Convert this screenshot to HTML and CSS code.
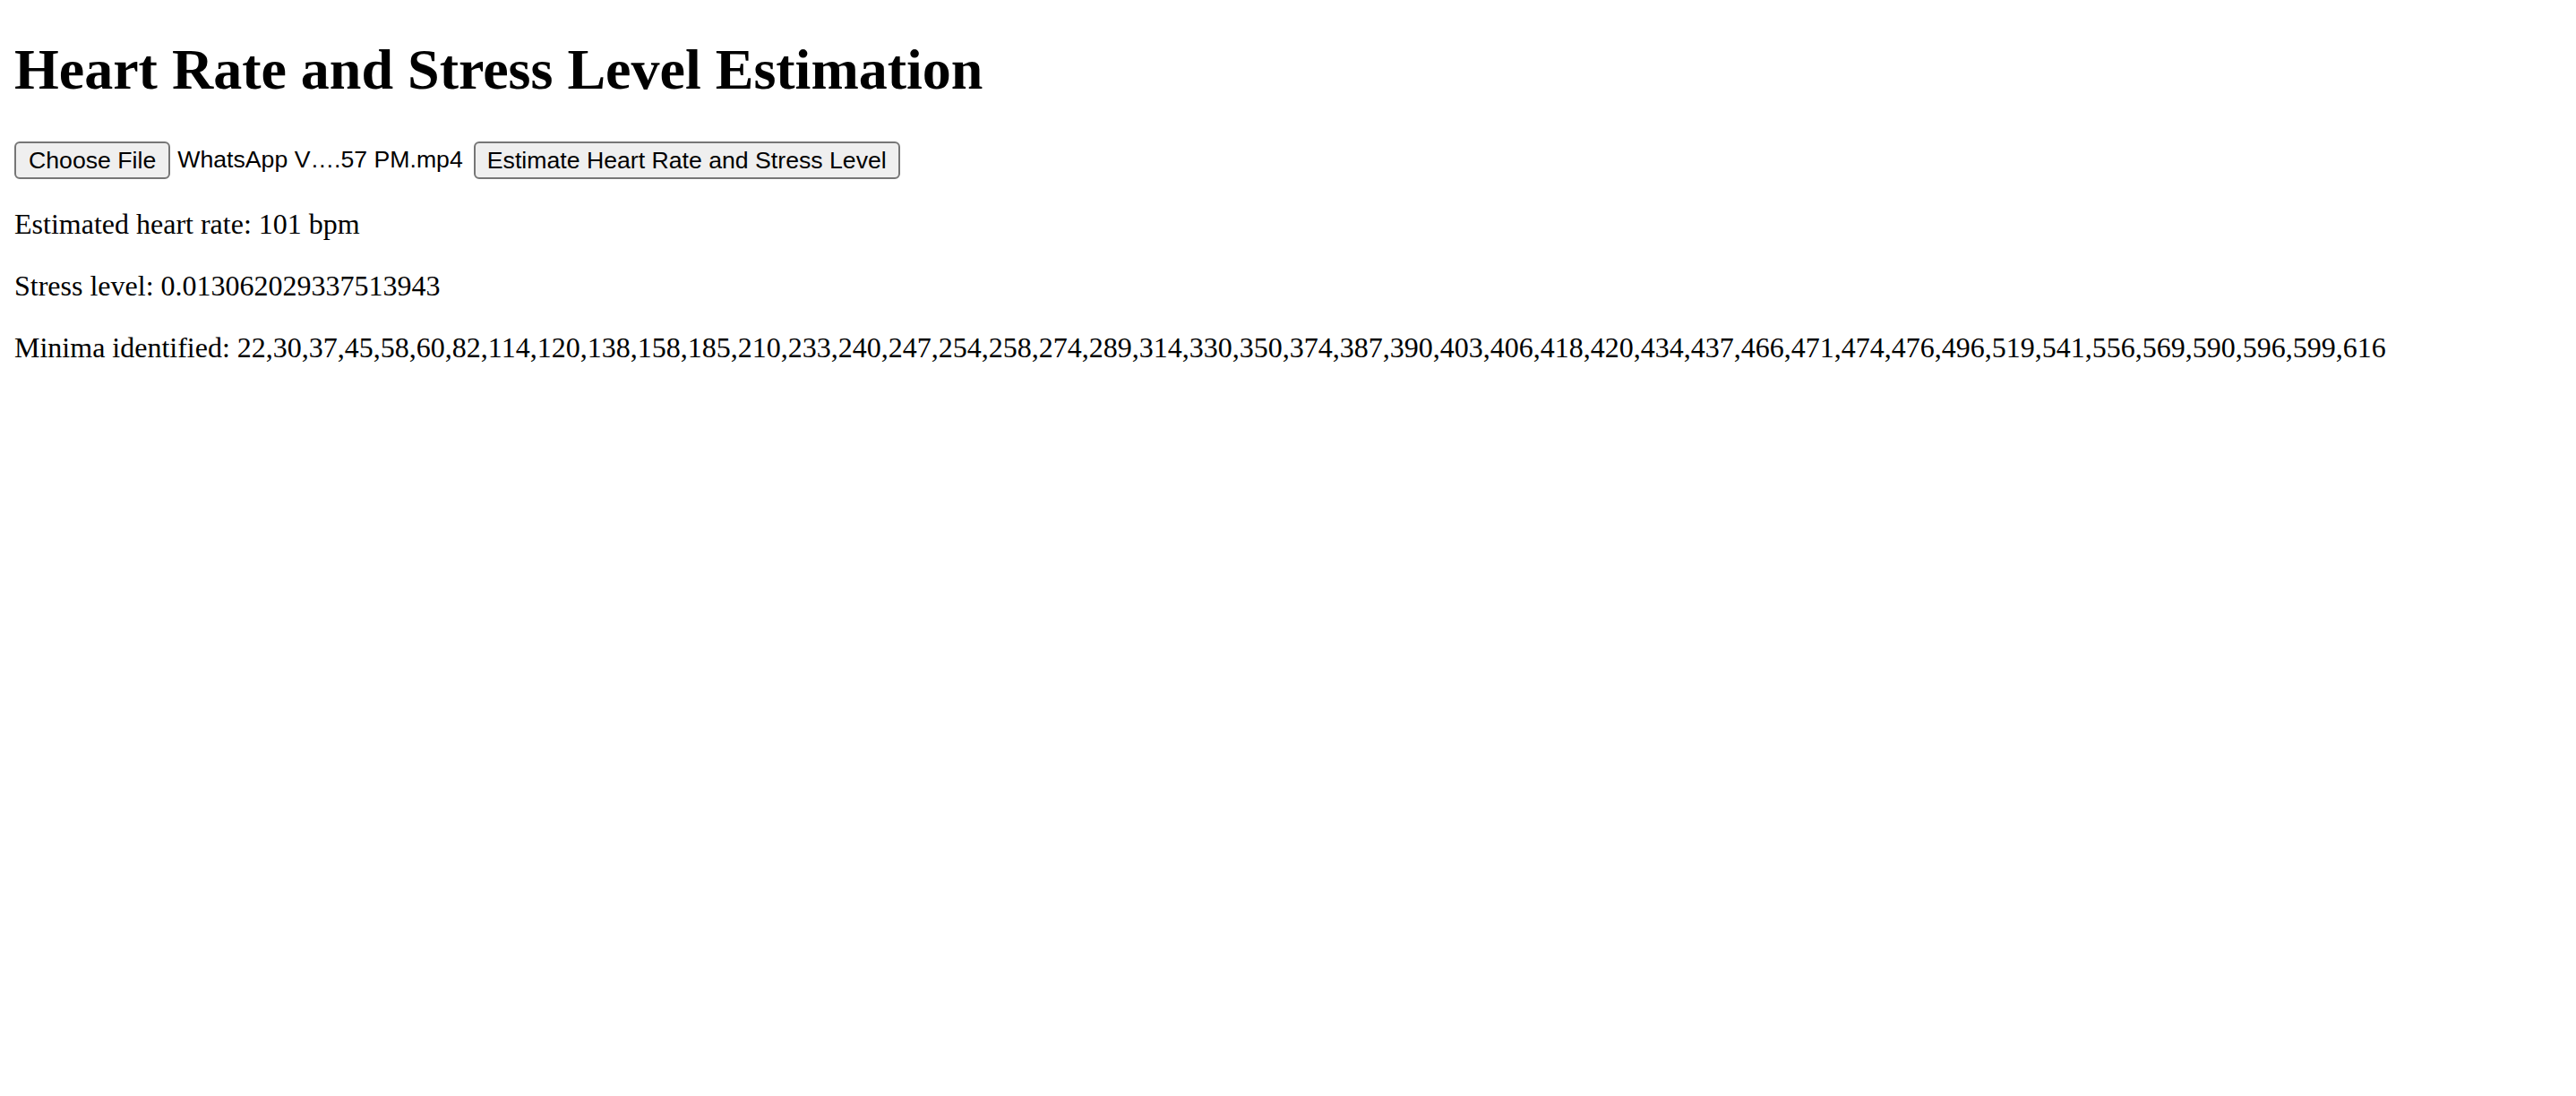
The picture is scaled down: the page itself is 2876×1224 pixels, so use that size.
FILE: index.html
```html
<!DOCTYPE html>
<html>
<head>
<meta charset="utf-8">
<title>Heart Rate and Stress Level Estimation</title>
<link rel="stylesheet" href="styles.css">
</head>
<body>
<h1 class="title">Heart Rate and Stress Level Estimation</h1>
<div class="controls">
  <span class="file-input"><button class="btn" type="button">Choose File</button><span class="file-name">WhatsApp V….57 PM.mp4</span></span>
  <button class="btn btn-wide" type="button">Estimate Heart Rate and Stress Level</button>
</div>
<p class="result">Estimated heart rate: 101 bpm</p>
<p class="result">Stress level: 0.013062029337513943</p>
<p class="result">Minima identified: 22,30,37,45,58,60,82,114,120,138,158,185,210,233,240,247,254,258,274,289,314,330,350,374,387,390,403,406,418,420,434,437,466,471,474,476,496,519,541,556,569,590,596,599,616</p>
</body>
</html>
```

FILE: styles.css
```css
html {
  background: #ffffff;
}
body {
  margin: 16px;
  font-family: "Liberation Serif", "Times New Roman", serif;
  font-size: 32px;
  color: #000000;
}
.title {
  font-size: 64px;
  font-weight: bold;
  margin: 25px 0 42.88px;
}
.controls {
  display: flex;
  align-items: center;
  font-family: "Liberation Sans", Arial, sans-serif;
  font-size: 26.67px;
}
.file-input {
  display: inline-flex;
  align-items: center;
  margin-right: 12px;
}
.btn {
  font-family: "Liberation Sans", Arial, sans-serif;
  font-size: 26.67px;
  color: #000000;
  background: #efefef;
  border: 2px solid #767676;
  border-radius: 6px;
  padding: 2px 14px;
  margin: 0 4px 0 0;
  height: 42px;
  line-height: 1;
}
.btn-wide {
  padding: 2px 13px;
}
.file-name {
  margin-left: 4px;
}
.result {
  margin: 32px 0;
}
```
